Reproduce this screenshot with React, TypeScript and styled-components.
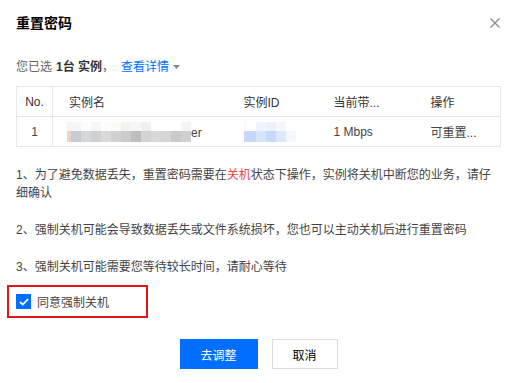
import React from "react";
import styled, { createGlobalStyle } from "styled-components";

const Global = createGlobalStyle`
  html, body { margin: 0; padding: 0; background: #fff; }
  body { font-family: "Liberation Sans", "Noto Sans CJK SC", Arial, sans-serif; }
  * { box-sizing: border-box; }
`;

const Dialog = styled.div`
  width: 515px;
  height: 383px;
  background: #fff;
  padding: 0 15px 0 16px;
  display: flex;
  flex-direction: column;
  color: #444;
  font-size: 12px;
`;

const Header = styled.div`
  height: 46px;
  display: flex;
  align-items: center;
  justify-content: space-between;
`;

const Title = styled.h1`
  margin: 0;
  font-size: 14px;
  font-weight: 700;
  color: #000;
  line-height: 20px;
`;

const Close = styled.button`
  border: 0;
  background: none;
  padding: 0;
  width: 10px;
  height: 10px;
  display: flex;
  cursor: pointer;
`;

const Summary = styled.div`
  height: 18px;
  margin-top: 12px;
  display: flex;
  align-items: center;
  line-height: 18px;
  color: #666;
`;

const Strong = styled.b`
  color: #333;
  margin: 0 0 0 4px;
`;

const Link = styled.a`
  color: #006eff;
  text-decoration: none;
  margin-left: 7px;
  display: inline-flex;
  align-items: center;
  gap: 4px;
`;

const Table = styled.table`
  margin-top: 10px;
  width: 484px;
  border-collapse: collapse;
  table-layout: fixed;
  border: 1px solid #e5e8ee;
`;

const Th = styled.th<{ $center?: boolean; $divider?: boolean }>`
  height: 30px;
  padding: 0 0 0 ${(p) => (p.$center ? 0 : 16)}px;
  text-align: ${(p) => (p.$center ? "center" : "left")};
  font-weight: 400;
  color: #333;
  font-size: 12px;
  border-bottom: 1px solid #e5e8ee;
  border-right: ${(p) => (p.$divider ? "1px solid #e5e8ee" : "0")};
  white-space: nowrap;
`;

const Td = styled.td<{ $center?: boolean; $divider?: boolean }>`
  height: 30px;
  padding: 0 0 0 ${(p) => (p.$center ? 0 : 16)}px;
  text-align: ${(p) => (p.$center ? "center" : "left")};
  color: #444;
  font-size: 12px;
  border-right: ${(p) => (p.$divider ? "1px solid #e5e8ee" : "0")};
  white-space: nowrap;
`;

const MosaicWrap = styled.div<{ $shift?: number }>`
  display: flex;
  align-items: flex-end;
  margin-left: ${(p) => p.$shift ?? 0}px;
`;

const Mosaic = styled.div`
  display: grid;
  grid-auto-flow: column;
  grid-template-rows: 9px 11px;
`;

const Cell = styled.span<{ $c: string; $w: number }>`
  width: ${(p) => p.$w}px;
  background: ${(p) => p.$c};
`;

const Tail = styled.span`
  line-height: 14px;
  margin-bottom: 2px;
`;

const Notes = styled.div`
  margin-top: 19px;
  display: flex;
  flex-direction: column;
  gap: 19px;
  line-height: 18px;
  color: #444;
  padding-right: 6px;
`;

const Note = styled.p`
  margin: 0;
`;

const Danger = styled.span`
  color: #e54545;
`;

const AgreeBox = styled.label`
  margin: 9px 0 0 -9px;
  width: 141px;
  height: 33px;
  border: 2px solid #e3131b;
  display: flex;
  align-items: center;
  gap: 6px;
  padding-left: 7px;
  color: #444;
  cursor: pointer;
`;

const Check = styled.span`
  width: 15px;
  height: 15px;
  background: #006eff;
  display: flex;
  align-items: center;
  justify-content: center;
`;

const Footer = styled.div`
  margin-top: 21px;
  display: flex;
  justify-content: center;
  gap: 14px;
  padding-left: 1px;
`;

const Button = styled.button<{ $primary?: boolean }>`
  height: 30px;
  width: ${(p) => (p.$primary ? 78 : 66)}px;
  font-size: 12px;
  font-family: inherit;
  border: 1px solid ${(p) => (p.$primary ? "#006eff" : "#ddd")};
  background: ${(p) => (p.$primary ? "#006eff" : "#fff")};
  color: ${(p) => (p.$primary ? "#fff" : "#000")};
  cursor: pointer;
  padding: 0;
`;

const nameTop = ["#fbf4ee", "#f7f7f9", "#fcfcfc", "#f6f6f8", "#fcfcfc", "#fef9f5", "#f2f2f2", "#f6f6f6", "#f0f0f0", "#fff", "#fff", "#fff", "#f4f4f4"];
const nameBottom = ["#e8d4c8", "#c8ccd0", "#d4d8dc", "#d0d0d0", "#dadada", "#d0d0d0", "#cbcbcb", "#bebebe", "#d4d4d4", "#d8d8d8", "#d6d6d6", "#cccac8", "#d0d0d0"];
const idTop = ["#f8f9fe", "#fff", "#eef3fe", "#eaf0fc", "#f4f8fe", "#fff"];
const idBottom = ["#c8d8fc", "#c8d8fc", "#d8e4fc", "#c8d8fc", "#dde8f8", "#f4f8fe"];

const renderMosaic = (top: string[], bottom: string[], first: number) => (
  <Mosaic>
    {top.map((c, i) => [
      <Cell key={`t${i}`} $c={c} $w={i === 0 ? first : 10} />,
      <Cell key={`b${i}`} $c={bottom[i]} $w={i === 0 ? first : 10} />,
    ])}
  </Mosaic>
);

export default function App() {
  return (
    <>
      <Global />
      <Dialog>
        <Header>
          <Title>重置密码</Title>
          <Close aria-label="close">
            <svg width="10" height="10" viewBox="0 0 10 10">
              <path d="M0.5 0.5L9.5 9.5M9.5 0.5L0.5 9.5" stroke="#888" strokeWidth="1.3" />
            </svg>
          </Close>
        </Header>
        <Summary>
          您已选<Strong>1台 实例</Strong>，
          <Link>
            查看详情
            <svg width="7" height="4" viewBox="0 0 7 4">
              <path d="M0 0H7L3.5 4Z" fill="#888" />
            </svg>
          </Link>
        </Summary>
        <Table>
          <colgroup>
            <col style={{ width: 36 }} />
            <col style={{ width: 175 }} />
            <col style={{ width: 90 }} />
            <col style={{ width: 97 }} />
            <col style={{ width: 86 }} />
          </colgroup>
          <thead>
            <tr>
              <Th $center $divider>No.</Th>
              <Th>实例名</Th>
              <Th>实例ID</Th>
              <Th>当前带...</Th>
              <Th>操作</Th>
            </tr>
          </thead>
          <tbody>
            <tr>
              <Td $center $divider>1</Td>
              <Td>
                <MosaicWrap $shift={-2}>
                  {renderMosaic(nameTop, nameBottom, 4)}
                  <Tail>er</Tail>
                </MosaicWrap>
              </Td>
              <Td>
                <MosaicWrap>{renderMosaic(idTop, idBottom, 2)}</MosaicWrap>
              </Td>
              <Td>1 Mbps</Td>
              <Td>可重置...</Td>
            </tr>
          </tbody>
        </Table>
        <Notes>
          <Note>
            1、为了避免数据丢失，重置密码需要在<Danger>关机</Danger>状态下操作，实例将关机中断您的业务，请仔细确认
          </Note>
          <Note>2、强制关机可能会导致数据丢失或文件系统损坏，您也可以主动关机后进行重置密码</Note>
          <Note>3、强制关机可能需要您等待较长时间，请耐心等待</Note>
        </Notes>
        <AgreeBox>
          <Check>
            <svg width="10" height="8" viewBox="0 0 10 8">
              <path d="M1 4L3.8 6.6L9 1.2" stroke="#fff" strokeWidth="1.8" fill="none" />
            </svg>
          </Check>
          同意强制关机
        </AgreeBox>
        <Footer>
          <Button $primary>去调整</Button>
          <Button>取消</Button>
        </Footer>
      </Dialog>
    </>
  );
}
